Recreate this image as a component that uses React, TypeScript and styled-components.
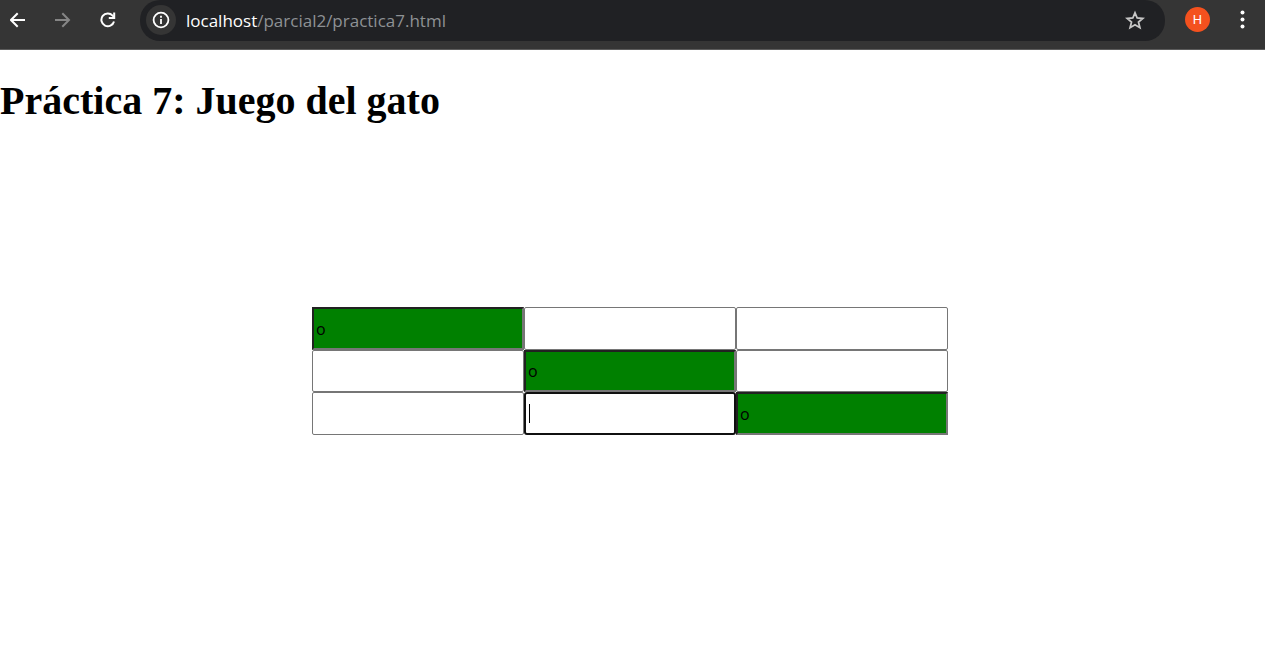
import React from 'react';
import styled, { createGlobalStyle } from 'styled-components';

const GlobalStyle = createGlobalStyle`
  body {
    margin: 0;
    background: #ffffff;
    color: #000000;
    font-family: "Liberation Serif", "Times New Roman", serif;
  }
  *, *::before, *::after { box-sizing: border-box; }
`;

const Toolbar = styled.header`
  display: flex;
  align-items: flex-start;
  height: 50px;
  background: #353535;
  border-bottom: 1px solid #5c5c5c;
`;

const NavGroup = styled.nav`
  display: flex;
  align-items: center;
  justify-content: space-between;
  flex: none;
  width: 140px;
  height: 39px;
  padding: 0 20px 0 5px;
`;

const IconButton = styled.button<{ $size?: number; $fill?: string }>`
  display: flex;
  align-items: center;
  justify-content: center;
  flex: none;
  width: ${({ $size = 25 }) => $size}px;
  height: ${({ $size = 25 }) => $size}px;
  padding: 0;
  border: 0;
  border-radius: 50%;
  background: ${({ $fill = 'transparent' }) => $fill};
  color: #ffffff;
  &:disabled { color: #868686; }
`;

const AddressBar = styled.div`
  display: flex;
  align-items: center;
  flex: 1;
  min-width: 0;
  height: 41px;
  padding: 0 18px 1px 6px;
  border-radius: 20px;
  background: #202124;
`;

const Address = styled.a`
  flex: 1;
  min-width: 0;
  overflow: hidden;
  padding: 2px 0 0 10px;
  white-space: nowrap;
  color: #8e9194;
  font: 17px/28px "Open Sans", "Noto Sans", sans-serif;
  text-decoration: none;
`;

const Host = styled.span`
  color: #ffffff;
`;

const AccountGroup = styled.div`
  display: flex;
  align-items: center;
  justify-content: space-between;
  flex: none;
  width: 100px;
  height: 39px;
  padding: 0 10px 0 20px;
`;

const Avatar = styled(IconButton)`
  font: 13px/25px Roboto, sans-serif;
`;

const Title = styled.h1`
  margin: 28px 0 0;
  font-size: 40px;
  line-height: 46px;
`;

const Board = styled.main`
  display: grid;
  grid-template-columns: repeat(3, 212px);
  grid-template-rows: 43px 42px 43px;
  justify-content: center;
  padding: 183px 5px 40px 0;
`;

const Cell = styled.input<{ $won: boolean; $active: boolean }>`
  width: 100%;
  height: 100%;
  margin: 0;
  padding: 0 2px;
  outline: 0;
  border: 1px solid #767676;
  border-radius: 2px;
  background: #ffffff;
  color: #000000;
  font: 16px/20px "Open Sans", Arial, sans-serif;
  ${({ $won }) => $won && `
    border-width: 2px;
    border-color: #222222 #767676 #767676 #222222;
    border-radius: 0;
    background: #008000;
  `}
  ${({ $active }) => $active && `
    border: 2px solid #101010;
    border-radius: 3px;
    background: linear-gradient(#000000, #000000) 3px center / 1px 19px no-repeat #ffffff;
    caret-color: transparent;
  `}
`;

const board = ['o', '', '', '', 'o', '', '', '', 'o'];
const activeCell = 7;

export default function App() {
  return (
    <>
      <GlobalStyle />
      <Toolbar>
        <NavGroup aria-label="Navegación">
          <IconButton aria-label="Atrás">
            <svg width="16" height="16" viewBox="0 0 16 16" fill="none" stroke="currentColor" strokeWidth="2">
              <path d="M15 8H1.5M7.7 1.3 1 8l6.7 6.7" />
            </svg>
          </IconButton>
          <IconButton aria-label="Adelante" disabled>
            <svg width="16" height="16" viewBox="0 0 16 16" fill="none" stroke="currentColor" strokeWidth="2">
              <path d="M0 8H13.5M7.3 1.3 14 8l-6.7 6.7" />
            </svg>
          </IconButton>
          <IconButton aria-label="Recargar">
            <svg width="16" height="16" viewBox="0 0 16 16" fill="none" stroke="currentColor" strokeWidth="2">
              <path d="M14 9.5A6.4 6.4 0 1 1 12.6 3.6L14 5" />
              <path d="M14.2.5v5.6H8.8" />
            </svg>
          </IconButton>
        </NavGroup>
        <AddressBar>
          <IconButton $size={30} $fill="#353535" aria-label="Información del sitio">
            <svg width="18" height="18" viewBox="0 0 18 18" fill="none" stroke="currentColor" strokeWidth="1.8">
              <circle cx="9" cy="9" r="7.4" />
              <path d="M9 8v5M9 4.8v2" />
            </svg>
          </IconButton>
          <Address href="#">
            <Host>localhost</Host>/parcial2/practica7.html
          </Address>
          <IconButton $size={24} aria-label="Añadir a marcadores">
            <svg width="20" height="20" viewBox="0 0 20 20" fill="none" stroke="#c7c7c7" strokeWidth="1.8">
              <path d="m10 2.8 2.2 5.2 5.6.5-4.3 3.6 1.4 5.6-4.9-3-4.9 3 1.4-5.6L2.2 8.5l5.6-.5z" />
            </svg>
          </IconButton>
        </AddressBar>
        <AccountGroup>
          <Avatar $fill="#f4511e" aria-label="Perfil">H</Avatar>
          <IconButton aria-label="Menú">
            <svg width="5" height="19" viewBox="0 0 5 19" fill="currentColor">
              <circle cx="2.5" cy="2.5" r="2" />
              <circle cx="2.5" cy="9.5" r="2" />
              <circle cx="2.5" cy="16.5" r="2" />
            </svg>
          </IconButton>
        </AccountGroup>
      </Toolbar>
      <Title>Práctica 7: Juego del gato</Title>
      <Board>
        {board.map((mark, i) => (
          <Cell
            key={i}
            defaultValue={mark}
            maxLength={1}
            aria-label={`Casilla ${i + 1}`}
            $won={mark === 'o'}
            $active={i === activeCell}
          />
        ))}
      </Board>
    </>
  );
}
